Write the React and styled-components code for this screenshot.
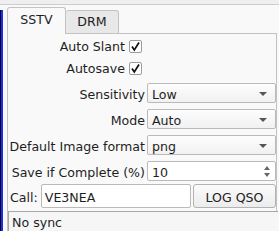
import React from "react";
import styled, { createGlobalStyle } from "styled-components";

const Global = createGlobalStyle`
	html, body {
		margin: 0;
		padding: 0;
		background: #efefef;
		font-family: "DejaVu Sans", "Liberation Sans", sans-serif;
		font-size: 12.6px;
		color: #1e1e1e;
	}
`;

const Page = styled.div`
	width: 279px;
	height: 231px;
	padding-top: 4px;
	box-sizing: border-box;
	overflow: hidden;
`;

const Frame = styled.div`
	display: flex;
	height: 227px;
	border-top: 1px solid #cdcdcd;
	background: #f9f9f9;
`;

const Waterfall = styled.div`
	width: 3px;
	margin-top: 5px;
	background: linear-gradient(to right, #050510 0 1px, #1c2cf0 1px 3px);
`;

const Content = styled.div`
	flex: 1;
	display: flex;
	flex-direction: column;
	padding: 3px 2px 0 4px;
	min-width: 0;
`;

const TabBar = styled.div`
	display: flex;
	align-items: flex-end;
	height: 26px;
	margin-bottom: -1px;
	position: relative;
	z-index: 1;
`;

const Tab = styled.div`
	box-sizing: border-box;
	height: ${(p) => (p.$active ? "27px" : "24px")};
	width: ${(p) => p.$w}px;
	display: flex;
	align-items: center;
	justify-content: center;
	padding-bottom: ${(p) => (p.$active ? "3px" : "1px")};
	border: 1px solid #c2c2c2;
	border-bottom: ${(p) => (p.$active ? "none" : "1px solid #c2c2c2")};
	border-left: ${(p) => (p.$first ? "1px solid #c2c2c2" : "none")};
	border-radius: 3px 3px 0 0;
	background: ${(p) => (p.$active ? "#f9f9f9" : "#e8e8e8")};
`;

const Pane = styled.div`
	flex: 1;
	border: 1px solid #c2c2c2;
	border-bottom: none;
	display: flex;
	flex-direction: column;
	padding: 4px 0 0 0;
`;

const CheckRow = styled.div`
	display: grid;
	grid-template-columns: 134px;
	height: 17px;
	margin-bottom: 5px;
	align-items: center;
`;

const CheckLabel = styled.label`
	display: flex;
	justify-content: flex-end;
	align-items: center;
	gap: 4px;
	white-space: nowrap;
`;

const Box = styled.span`
	width: 13px;
	height: 13px;
	box-sizing: border-box;
	border: 1px solid #9c9c9c;
	border-radius: 2px;
	background: #fff;
	display: flex;
	align-items: center;
	justify-content: center;
`;

const FormRow = styled.div`
	display: grid;
	grid-template-columns: 137px 1fr;
	column-gap: 2px;
	align-items: center;
	height: ${(p) => p.$h || 20}px;
	margin-top: ${(p) => p.$mt || 6}px;
`;

const Label = styled.span`
	text-align: right;
	white-space: nowrap;
	padding-top: 2px;
`;

const Combo = styled.div`
	height: 20px;
	box-sizing: border-box;
	border: 1px solid #bababa;
	border-radius: 2px;
	background: linear-gradient(#fdfdfd, #f1f1f1);
	display: flex;
	align-items: center;
	justify-content: space-between;
	padding: 2px 8px 0 4px;
`;

const Arrow = styled.span`
	width: 0;
	height: 0;
	margin-top: -1px;
	border-left: 4px solid transparent;
	border-right: 4px solid transparent;
	border-top: 4px solid #555;
`;

const Spin = styled(Combo)`
	background: #fff;
	padding-right: 5px;
`;

const SpinArrows = styled.span`
	display: flex;
	flex-direction: column;
	gap: 3px;
	margin-top: -2px;
`;

const SmallTri = styled.span`
	width: 0;
	height: 0;
	border-left: 3px solid transparent;
	border-right: 3px solid transparent;
	${(p) => (p.$up ? "border-bottom: 4px solid #666;" : "border-top: 4px solid #666;")}
`;

const CallRow = styled.div`
	display: flex;
	align-items: center;
	height: 24px;
	margin-top: 3px;
	padding-left: 2px;
	gap: 2px;
`;

const CallLabel = styled.span`
	padding-top: 2px;
	margin-right: 1px;
`;

const Edit = styled.div`
	flex: 1;
	height: 24px;
	box-sizing: border-box;
	border: 1px solid #bababa;
	border-radius: 2px;
	background: #fff;
	display: flex;
	align-items: center;
	padding: 2px 3px 0;
`;

const Button = styled.button`
	width: 83px;
	height: 24px;
	border: 1px solid #b2b2b2;
	border-radius: 3px;
	background: linear-gradient(#fbfbfb, #ececec);
	font: inherit;
	color: #222;
	padding: 2px 0 0;
`;

const StatusBar = styled.div`
	height: 20px;
	margin-top: 3px;
	margin-right: -2px;
	box-sizing: border-box;
	border-top: 1px solid #a8a8a8;
	border-left: 1px solid #a8a8a8;
	background: #f6f6f6;
	display: flex;
	align-items: center;
	padding: 1px 3px 0;
`;

const Check = () => (
	<svg width="11" height="11" viewBox="0 0 11 11">
		<path d="M2 5.5 L4.3 9 L9 1.5" fill="none" stroke="#111" strokeWidth="1.7" />
	</svg>
);

const CheckItem = ({ label }) => (
	<CheckRow>
		<CheckLabel>
			{label}
			<Box>
				<Check />
			</Box>
		</CheckLabel>
	</CheckRow>
);

const ComboRow = ({ label, value, mt }) => (
	<FormRow $mt={mt}>
		<Label>{label}</Label>
		<Combo>
			<span>{value}</span>
			<Arrow />
		</Combo>
	</FormRow>
);

export default function App() {
	return (
		<Page>
			<Global />
			<Frame>
				<Waterfall />
				<Content>
					<TabBar>
						<Tab $active $first $w={59}>SSTV</Tab>
						<Tab $w={53}>DRM</Tab>
					</TabBar>
					<Pane>
						<CheckItem label="Auto Slant" />
						<CheckItem label="Autosave" />
						<ComboRow label="Sensitivity" value="Low" mt={1} />
						<ComboRow label="Mode" value="Auto" />
						<ComboRow label="Default Image format" value="png" />
						<FormRow>
							<Label>Save if Complete (%)</Label>
							<Spin>
								<span>10</span>
								<SpinArrows>
									<SmallTri $up />
									<SmallTri />
								</SpinArrows>
							</Spin>
						</FormRow>
						<CallRow>
							<CallLabel>Call:</CallLabel>
							<Edit>VE3NEA</Edit>
							<Button>LOG QSO</Button>
						</CallRow>
						<StatusBar>No sync</StatusBar>
					</Pane>
				</Content>
			</Frame>
		</Page>
	);
}
